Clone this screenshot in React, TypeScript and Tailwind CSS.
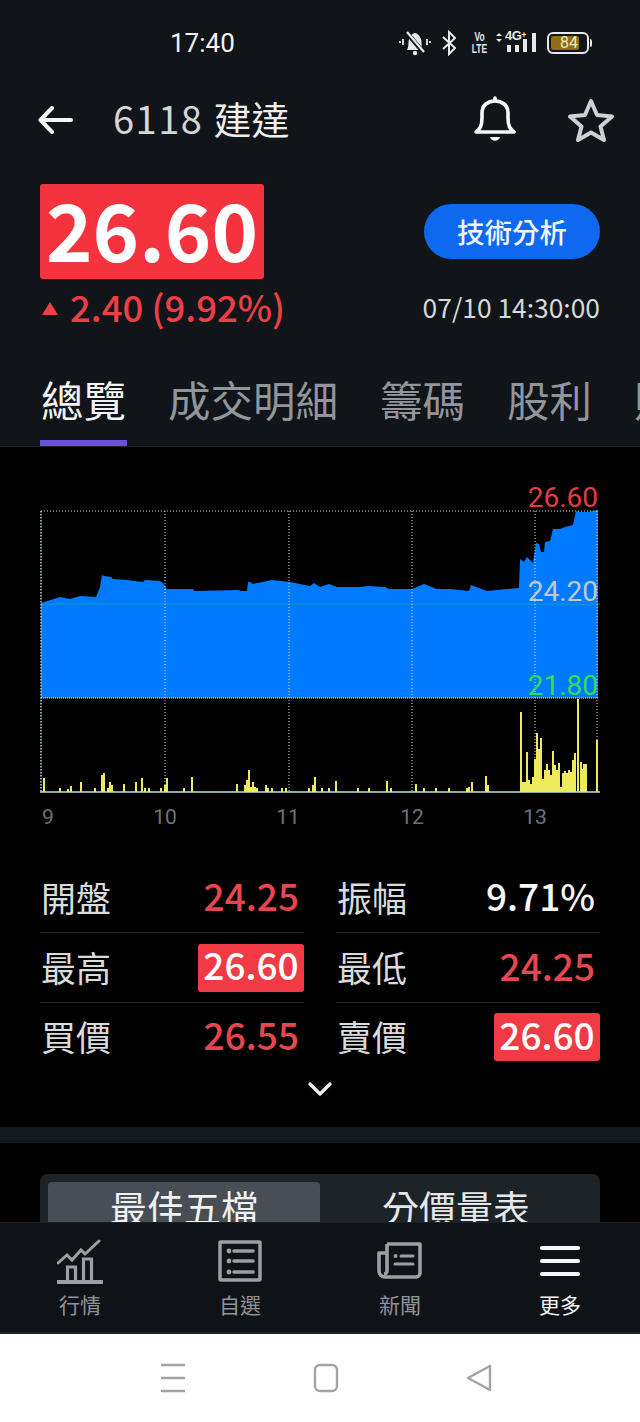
import { ChevronDown } from 'lucide-react'

const areaPts = '41,603 60,597 70,599 80,596 96,597 100,587 102,575 104,576 111,577 113,579 127,580 143,582 145,580 160,581 163,583 167,589 193,589 194,591 238,590 241,591 247,591 248,582 250,582 253,584 272,580 290,582 310,586 314,583 320,587 329,584 337,587 360,587 368,586 385,587 389,589 412,589 424,584 437,589 450,589 469,591 471,585 487,591 519,588 520,559 524,562 527,557 533,563 536,543 539,544 541,552 544,552 545,542 550,541 553,529 560,529 565,527 573,525 576,511 580,512 588,512 598,510 598,698 41,698'

// [x, height] in screen pixels, measured off the reference
const volumes: [number, number][] = [
  [44, 14], [60, 4], [68, 3], [71, 6], [81, 10], [95, 4], [102, 17], [104, 19], [108, 4], [110, 10], [112, 7],
  [124, 8], [136, 10], [142, 14], [145, 4], [149, 4], [161, 4], [165, 7], [167, 14], [184, 4], [192, 15],
  [237, 8], [245, 7], [247, 12], [249, 22], [251, 5], [253, 10], [255, 5], [257, 4], [266, 7], [268, 4], [272, 4],
  [282, 4], [286, 4], [309, 4], [313, 7], [315, 15], [322, 4], [329, 4], [336, 11], [358, 4], [369, 4], [387, 11],
  [391, 4], [416, 8], [424, 4], [436, 4], [449, 4], [467, 4], [469, 5], [472, 10], [486, 16], [488, 7],
  [521, 80], [523, 10], [525, 10], [527, 40], [529, 12], [531, 8], [533, 15], [535, 33], [537, 59], [539, 43],
  [541, 54], [543, 13], [545, 22], [547, 28], [549, 22], [551, 17], [553, 41], [555, 27], [557, 22], [559, 29],
  [561, 5], [563, 19], [565, 21], [567, 19], [569, 22], [571, 20], [573, 32], [575, 39], [578, 93], [581, 30],
  [582, 23], [584, 28], [586, 28], [597, 52],
]

const gridX = [165, 289, 412, 535, 597]
const hours: [number, string][] = [[48, '9'], [165, '10'], [288, '11'], [412, '12'], [535, '13']]

function StatusBar() {
  return (
    <div className="h-[85px] shrink-0 flex items-end pb-[27px] pl-[170px] pr-[48px] justify-between">
      <span className="font-['Roboto',sans-serif] text-[26px] leading-[30px] text-[#f2f3f4]">17:40</span>
      <div className="flex items-center h-[30px] text-[#e6e8ea]">
        {/* muted bell */}
        <svg width="34" height="26" viewBox="0 0 34 26" fill="none">
          <path d="M9 20c2-3 1-8 2-11 1-3 4-6 6-6s5 3 6 6c1 3 0 8 2 11z" fill="#e6e8ea" />
          <circle cx="17" cy="23" r="2.200" fill="#e6e8ea" />
          <path d="M9 3 26 23" stroke="#111418" strokeWidth="4.500" />
          <path d="M9 2 26 22" stroke="#e6e8ea" strokeWidth="2.200" />
          <path d="M5 9v6M2 11v2M29 9v6M32 11v2" stroke="#e6e8ea" strokeWidth="1.800" />
        </svg>
        {/* bluetooth */}
        <svg className="ml-[10px]" width="14" height="26" viewBox="0 0 14 26" fill="none" stroke="#e6e8ea" strokeWidth="2">
          <path d="M1 7l12 11-6 6V2l6 6L1 19" />
        </svg>
        <div className="ml-[16px] w-[15px] flex flex-col items-center scale-x-[0.65] font-['Liberation_Sans',sans-serif] font-bold text-[13px] leading-[12px]">
          <span>Vo</span>
          <span>LTE</span>
        </div>
        {/* signal */}
        <div className="relative ml-[9px] w-[40px] h-[26px]">
          <svg className="absolute inset-0" width="40" height="26" viewBox="0 0 40 26" fill="#e6e8ea">
            <path d="M0 6l3-3 3 3zM0 9l3 3 3-3z" />
            <rect x="11" y="15" width="4" height="7" />
            <rect x="19" y="15" width="4" height="7" />
            <rect x="27" y="9" width="4" height="13" />
            <rect x="36" y="3" width="4" height="19" />
          </svg>
          <span className="absolute left-[9px] top-[-1px] font-['Liberation_Sans',sans-serif] font-bold text-[13px] leading-[13px] tracking-[-0.5px]">
            4G<span className="text-[9px] align-top">+</span>
          </span>
        </div>
        {/* battery */}
        <div className="ml-[11px] flex items-center">
          <div className="w-[42px] h-[22px] rounded-[6px] border-2 border-[#e6e8ea] p-[2px] flex">
            <div className="w-[28px] bg-[#8d6f16] rounded-[2px] flex items-center justify-end pr-[1px] font-['Roboto',sans-serif] text-[16px] leading-none text-[#f3e7bd]">84</div>
          </div>
          <div className="w-[2px] h-[8px] bg-[#e6e8ea] ml-[1px] rounded-r-sm" />
        </div>
      </div>
    </div>
  )
}

function Header() {
  return (
    <div className="h-[70px] shrink-0 flex items-center pl-[38px] pr-[26px]">
      <svg width="36" height="30" viewBox="0 0 36 30" fill="none" stroke="#f4f5f6" strokeWidth="4" strokeLinecap="round" strokeLinejoin="round">
        <path d="M33 15H3M14 3 2.500 15 14 27" />
      </svg>
      <div className="ml-[39px] mt-[-4px] text-[38px] leading-[44px] text-[#d4d7da] tracking-[1.5px] whitespace-nowrap">6118 <span className="text-[38px] text-[#eceeef] tracking-normal">建達</span></div>
      <div className="ml-auto flex items-center gap-[50px]">
        <svg width="46" height="48" viewBox="0 0 46 48" fill="none" stroke="#f6f7f8" strokeWidth="3.600" strokeLinejoin="round">
          <path d="M4 36c4-3 6-6 6-14v-5c0-8 6-12 13-12s13 4 13 12v5c0 8 2 11 6 14z" />
          <path d="M23 5V2" strokeLinecap="round" />
          <path d="M18 41c1 5 9 5 10 0z" fill="#f6f7f8" stroke="none" />
        </svg>
        <svg width="46" height="44" viewBox="0 0 46 44" fill="none" stroke="#cdd1d5" strokeWidth="4" strokeLinejoin="round">
          <path d="M23 3l6 14 15 1.500-11.500 10L36 42l-13-7.500L10 42l3.500-13.500L2 18.500 17 17z" />
        </svg>
      </div>
    </div>
  )
}

function Quote() {
  return (
    <div className="shrink-0 pl-[40px] pr-[40px] pt-[29px] flex justify-between">
      <div>
        <div className="w-[224px] h-[95px] pb-[8px] bg-[#f5333f] rounded-[3px] flex items-center justify-center text-[79px] leading-none font-bold text-white">26.60</div>
        <div className="mt-[5px] flex items-center text-[#ee3e46]">
          <svg className="ml-[2px] mt-[3px]" width="16" height="13" viewBox="0 0 16 13" fill="#ee3e46">
            <path d="M8 0l8 13H0z" />
          </svg>
          <span className="ml-[12px] text-[36.5px] leading-[46px] font-medium whitespace-nowrap">2.40 (9.92%)</span>
        </div>
      </div>
      <div className="flex flex-col items-end pt-[20px]">
        <div className="w-[176px] h-[55px] rounded-full bg-[#0f69f0] flex items-center justify-center text-[27.5px] font-medium leading-none text-[#f2f6fc]">技術分析</div>
        <div className="mt-[32px] text-[26.4px] leading-[32px] text-[#d6d9dc] whitespace-nowrap">07/10 14:30:00</div>
      </div>
    </div>
  )
}

function Tabs() {
  const others = ['成交明細', '籌碼', '股利', '財報']
  return (
    <div className="shrink-0 h-[88px] mt-[29px] pl-[40px] border-b border-[#23272b] flex overflow-hidden gap-[42px] text-[42.5px] leading-[50px] text-[#90969b] whitespace-nowrap">
      <div className="relative h-full w-[87px] shrink-0 mr-[-1px] pt-[15px] text-[#f3f4f5] pl-[1px]">
        總覽
        <div className="absolute left-0 right-0 bottom-0 h-[6px] bg-[#6a4fe0]" />
      </div>
      {others.map((t) => (
        <div key={t} className="pt-[15px] shrink-0">{t}</div>
      ))}
    </div>
  )
}

function Chart() {
  return (
    <svg className="block mt-[33px]" width="640" height="350" viewBox="0 480 640 350">
      <polygon points={areaPts} fill="#007bff" />
      <line x1="41" y1="604" x2="600" y2="604" stroke="#1ea3a8" strokeWidth="1" opacity="0.7" />
      {gridX.map((x) => (
        <line key={x} x1={x} y1="511" x2={x} y2="792" stroke="#d8dde0" strokeWidth="1" strokeDasharray="1 2" />
      ))}
      <line x1="41" y1="511" x2="41" y2="792" stroke="#b6dcdc" strokeWidth="1.500" strokeDasharray="1.500 1.500" />
      <line x1="41" y1="511" x2="598" y2="511" stroke="#d8dde0" strokeWidth="1" strokeDasharray="1 2" />
      <line x1="41" y1="698" x2="598" y2="698" stroke="#d8eef5" strokeWidth="1" strokeDasharray="1 1" />
      {volumes.map(([x, h]) => (
        <rect key={x} x={x - 1} y={792 - h} width="2" height={h} fill="#efe95c" />
      ))}
      <line x1="40" y1="792" x2="600" y2="792" stroke="#bfe3e0" strokeWidth="1.500" />
      <g fontFamily="Roboto, sans-serif" fontSize="28" textAnchor="end">
        <text x="598" y="507" fill="#e23b3f">26.60</text>
        <text x="598" y="601" fill="#c4c8cc">24.20</text>
        <text x="598" y="695" fill="#33dd55">21.80</text>
      </g>
      <g fontFamily="Roboto, sans-serif" fontSize="21" fill="#6d7276" textAnchor="middle">
        {hours.map(([x, t]) => (
          <text key={t} x={x} y="824">{t}</text>
        ))}
      </g>
    </svg>
  )
}

function StatCell({ label, value, tone = 'up', boxed = false, last = false }: {
  label: string
  value: string
  tone?: 'up' | 'flat'
  boxed?: boolean
  last?: boolean
}) {
  return (
    <div className={last ? 'h-[68px] flex items-center justify-between' : 'h-[70px] flex items-center justify-between border-b border-[#25282c]'}>
      <span className="pl-[1px] mb-[2px] text-[35px] leading-[44px] text-[#d9dcde]">{label}</span>
      {boxed ? (
        <span className="w-[106px] h-[48px] pb-[6px] bg-[#f23a44] rounded-[3px] flex items-center justify-center text-[37px] leading-none font-medium text-white">{value}</span>
      ) : (
        <span className={tone === 'flat' ? 'pr-[5px] mb-[6px] text-[37px] leading-[44px] font-medium text-[#f6f7f8]' : 'pr-[5px] mb-[6px] text-[37px] leading-[44px] font-medium text-[#e6474e]'}>{value}</span>
      )}
    </div>
  )
}

function Stats() {
  return (
    <div className="mt-[33px] px-[40px] grid grid-cols-2 gap-x-[32px]">
      <StatCell label="開盤" value="24.25" />
      <StatCell label="振幅" value="9.71%" tone="flat" />
      <StatCell label="最高" value="26.60" boxed />
      <StatCell label="最低" value="24.25" />
      <StatCell label="買價" value="26.55" last />
      <StatCell label="賣價" value="26.60" boxed last />
    </div>
  )
}

function Segments() {
  return (
    <div className="mt-[31px] mx-[40px] h-[100px] rounded-[8px] bg-[#1e2328] p-[8px] flex">
      <div className="w-[272px] h-[80px] rounded-[4px] bg-[#474f55] text-center text-[37px] leading-[50px] text-[#f1f2f3]">最佳五檔</div>
      <div className="flex-1 text-center text-[37px] leading-[50px] text-[#e6e8ea]">分價量表</div>
    </div>
  )
}

function NavItem({ label, active = false, children }: { label: string; active?: boolean; children: React.ReactNode }) {
  return (
    <div className="w-[44px] flex flex-col items-center">
      <div className="h-[48px] flex items-center justify-center">{children}</div>
      <span className={active ? 'mt-[5px] text-[21px] leading-[28px] whitespace-nowrap text-[#f3f4f5]' : 'mt-[5px] text-[21px] leading-[28px] whitespace-nowrap text-[#8f9499]'}>{label}</span>
    </div>
  )
}

function BottomNav() {
  return (
    <div className="h-[112px] shrink-0 bg-[#0f1317] border-t border-[#1d2125] border-b-2 border-b-[#22262a] pl-[58px] pr-[58px] pt-[14px] flex justify-between">
      <NavItem label="行情">
        <svg width="46" height="48" viewBox="0 0 46 48" fill="none" stroke="#9ba0a5" strokeWidth="3.200">
          <path d="M0 45h45" strokeWidth="4" strokeLinecap="round" />
          <path d="M10.500 44V30h8v14M26.500 44V22h8v22" />
          <path d="M1 26l9-8 5 5 9-10 4 4L42 4" strokeWidth="3" strokeLinecap="round" />
        </svg>
      </NavItem>
      <NavItem label="自選">
        <svg width="44" height="42" viewBox="0 0 44 42" fill="none" stroke="#9ba0a5" strokeWidth="3.500">
          <rect x="2" y="2" width="40" height="38" rx="1" />
          <path d="M16 11h19M16 21h19M16 32h19" strokeLinecap="round" />
          <circle cx="11" cy="11" r="2.400" fill="#9ba0a5" stroke="none" />
          <circle cx="11" cy="21" r="2.400" fill="#9ba0a5" stroke="none" />
          <circle cx="11" cy="32" r="2.400" fill="#9ba0a5" stroke="none" />
        </svg>
      </NavItem>
      <NavItem label="新聞">
        <svg width="46" height="38" viewBox="0 0 46 38" fill="none" stroke="#9ba0a5" strokeWidth="3.600" strokeLinejoin="round">
          <path d="M10 2h33v29a4 4 0 0 1-4 4H8a6 6 0 0 1-6-6V11h8M10 2v27a3 3 0 0 1-3 3" />
          <path d="M24 14h12M18 22h18" strokeWidth="3" strokeLinecap="round" />
          <circle cx="18.500" cy="14" r="2" fill="#9ba0a5" stroke="none" />
        </svg>
      </NavItem>
      <NavItem label="更多" active>
        <div className="w-[40px] flex flex-col gap-[9px]">
          <div className="h-[4px] rounded-full bg-[#f6f7f8]" />
          <div className="h-[4px] rounded-full bg-[#f6f7f8]" />
          <div className="h-[4px] rounded-full bg-[#f6f7f8]" />
        </div>
      </NavItem>
    </div>
  )
}

function SystemBar() {
  return (
    <div className="h-[88px] shrink-0 bg-white flex items-center justify-center gap-[127px] pl-[12px]">
      <svg width="26" height="30" viewBox="0 0 26 30" fill="none" stroke="#a3a3a3" strokeWidth="2.400">
        <path d="M1 2h24M1 15h24M1 28h24" />
      </svg>
      <svg width="26" height="30" viewBox="0 0 26 30" fill="none" stroke="#a3a3a3" strokeWidth="2.400">
        <rect x="2" y="2" width="22" height="26" rx="5" />
      </svg>
      <svg width="26" height="30" viewBox="0 0 26 30" fill="none" stroke="#a3a3a3" strokeWidth="2.400" strokeLinejoin="round">
        <path d="M24 3v24L2 15z" />
      </svg>
    </div>
  )
}

export default function App() {
  return (
    <div className="w-[640px] h-[1422px] flex flex-col overflow-hidden bg-[#111418] font-['Noto_Sans_CJK_TC','Noto_Sans',sans-serif]">
      <StatusBar />
      <Header />
      <Quote />
      <Tabs />
      <div className="flex-1 min-h-0 overflow-hidden bg-black">
        <Chart />
        <Stats />
        <div className="mt-[-2px] flex justify-center text-[#e8eaec]">
          <ChevronDown size={40} strokeWidth={2} />
        </div>
        <div className="mt-[18px] h-[16px] bg-[#15191d]" />
        <Segments />
      </div>
      <BottomNav />
      <SystemBar />
    </div>
  )
}
